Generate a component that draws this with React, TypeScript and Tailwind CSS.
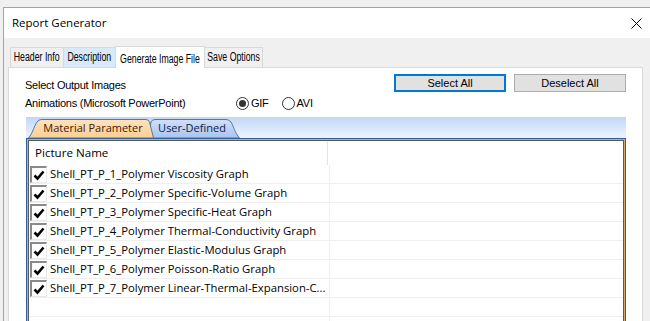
import React from 'react';

const rows = [
  'Shell_PT_P_1_Polymer Viscosity Graph',
  'Shell_PT_P_2_Polymer Specific-Volume Graph',
  'Shell_PT_P_3_Polymer Specific-Heat Graph',
  'Shell_PT_P_4_Polymer Thermal-Conductivity Graph',
  'Shell_PT_P_5_Polymer Elastic-Modulus Graph',
  'Shell_PT_P_6_Polymer Poisson-Ratio Graph',
  'Shell_PT_P_7_Polymer Linear-Thermal-Expansion-C...',
];

const tabs = [
  { label: 'Header Info', w: 'w-[54px]' },
  { label: 'Description', w: 'w-[53px]' },
  { label: 'Generate Image File', w: 'w-[90px]' },
  { label: 'Save Options', w: 'w-[59px]' },
];

const CheckBox = () => (
  <div className="ml-px mt-px w-[17px] h-[17px] shrink-0 border-l-2 border-t-2 border-[#8a8a8a] border-r border-b border-r-[#e8e8e8] border-b-[#e8e8e8] bg-white flex items-center justify-center">
    <svg width="12" height="11" viewBox="0 0 12 11">
      <path d="M1.5 5.5 L4.5 8.5 L10.5 1.5" fill="none" stroke="#000" strokeWidth="2.6" />
    </svg>
  </div>
);

const Radio = ({ checked, label }: { checked?: boolean; label: string }) => (
  <div className="flex items-center gap-[2px]">
    <div className="w-[13px] h-[13px] rounded-full border border-[#333] bg-white flex items-center justify-center">
      {checked && <div className="w-[7px] h-[7px] rounded-full bg-[#333]" />}
    </div>
    <span>{label}</span>
  </div>
);

export default function App() {
  return (
    <div className="w-[650px] h-[321px] overflow-hidden bg-[#f0f0f0] pt-[7px] pl-[3px] text-[11px] text-black font-['Liberation_Sans',Arial,sans-serif]">
      <div className="h-[400px] border-l border-t border-[#a3a3a3] flex flex-col">
        {/* title bar */}
        <div className="h-[30px] bg-white flex items-center justify-between pl-[8px] pr-[8px] shrink-0">
          <span className="text-[11.5px] font-['Open_Sans',sans-serif]">Report Generator</span>
          <svg width="11" height="11" viewBox="0 0 11 11">
            <path d="M0.5 0.5 L10.5 10.5 M10.5 0.5 L0.5 10.5" stroke="#000" strokeWidth="1" />
          </svg>
        </div>

        <div className="flex-1 flex flex-col pl-[4px] pr-[7px]">
          {/* tab strip */}
          <div className="flex items-end pt-[7px] pl-[2px] h-[29px] shrink-0 text-[12.5px]">
            {tabs.map((t, i) => {
              const selected = i === 2;
              const hover = i === 1;
              return (
                <div
                  key={t.label}
                  className={
                    t.w +
                    (selected
                      ? ' relative z-10 -mb-px h-[22px] bg-white border border-b-0 border-[#d9d9d9] flex justify-center items-start pt-[3px] -ml-px'
                      : hover
                      ? ' h-[20px] bg-[#d8eaf9] border border-b-0 border-[#d9d9d9] flex justify-center items-center -ml-px'
                      : ' h-[20px] bg-[#f0f0f0] border border-b-0 border-[#d9d9d9] flex justify-center items-center -ml-px first:ml-0')
                  }
                >
                  <span className="inline-block whitespace-nowrap scale-x-[0.7]">{t.label}</span>
                </div>
              );
            })}
          </div>

          {/* tab panel */}
          <div className="flex-1 bg-white border border-[#d9d9d9] pl-[16px] pr-[16px] pt-[6px] flex flex-col">
            <div className="flex items-start justify-between">
              <div className="flex flex-col mt-[2px] leading-[18px] tracking-[-0.25px]">
                <span>Select Output Images</span>
                <div className="flex items-center">
                  <span className="w-[211px]">Animations (Microsoft PowerPoint)</span>
                  <Radio checked label="GIF" />
                  <div className="ml-[13px]">
                    <Radio label="AVI" />
                  </div>
                </div>
              </div>
              <div className="flex gap-[8px]">
                <button className="w-[112px] h-[18px] bg-[#e1e1e1] border-2 border-[#0078d7] flex items-center justify-center leading-none">
                  Select All
                </button>
                <button className="w-[112px] h-[18px] bg-[#e1e1e1] border border-[#adadad] flex items-center justify-center leading-none">
                  Deselect All
                </button>
              </div>
            </div>

            {/* inner tab control */}
            <div className="mt-[5px] ml-px w-[600px] flex flex-col">
              <div className="h-[21px] bg-gradient-to-b from-[#c2d7f7] to-[#eef4fd] flex items-end pl-[2px] font-['Open_Sans',sans-serif] text-[11px]">
                <div className="relative z-10 w-[126px] h-[19px] flex items-center justify-center pl-[4px]">
                  <svg className="absolute inset-0" width="126" height="19" viewBox="0 0 126 19">
                    <defs>
                      <linearGradient id="mp" x1="0" y1="0" x2="0" y2="1">
                        <stop offset="0" stopColor="#fde3bd" />
                        <stop offset="1" stopColor="#fbcf92" />
                      </linearGradient>
                    </defs>
                    <path d="M0.5 19 C5 14 7 4 10 2 Q11.5 0.5 14 0.5 L118 0.5 Q120.5 0.5 121.5 3 L125.5 19 Z" fill="url(#mp)" stroke="#5576ad" strokeWidth="1" />
                  </svg>
                  <span className="relative text-[#4a1500]">Material Parameter</span>
                </div>
                <div className="relative -ml-[6px] w-[92px] h-[19px] flex items-center justify-center pr-[4px]">
                  <svg className="absolute inset-0" width="92" height="19" viewBox="0 0 92 19">
                    <defs>
                      <linearGradient id="ud" x1="0" y1="0" x2="0" y2="1">
                        <stop offset="0" stopColor="#cfe0fa" />
                        <stop offset="1" stopColor="#a9c4ee" />
                      </linearGradient>
                    </defs>
                    <path d="M0.5 19 L3 3 Q4 0.5 7 0.5 L78 0.5 Q81 0.5 83 3 C85 6 87 14 91.5 19 Z" fill="url(#ud)" stroke="#5576ad" strokeWidth="1" />
                  </svg>
                  <span className="relative text-[#10204a]">User-Defined</span>
                </div>
              </div>

              {/* grid */}
              <div className="border border-[#2f5f9f] font-['Open_Sans',sans-serif]">
                <div className="border border-[#d8ab6a]">
                  <div className="border border-[#595c50] bg-white h-[200px]">
                    <div className="flex h-[24px]">
                      <div className="w-[299px] pl-[6px] flex items-center border-r border-[#e3e3e3] text-[11.6px]">
                        Picture Name
                      </div>
                    </div>
                    {[...rows, '', ''].map((r, i) => (
                      <div key={i} className="flex h-[19px] border-b border-[#efefef]">
                        <div className="w-[301px] flex items-start border-r border-[#efefef]">
                          {r && <CheckBox />}
                          {r && (
                            <span className="ml-[3px] whitespace-nowrap overflow-hidden leading-[18px] text-[11.3px]">
                              {r}
                            </span>
                          )}
                        </div>
                      </div>
                    ))}
                  </div>
                </div>
              </div>
            </div>
          </div>
        </div>
      </div>
    </div>
  );
}
